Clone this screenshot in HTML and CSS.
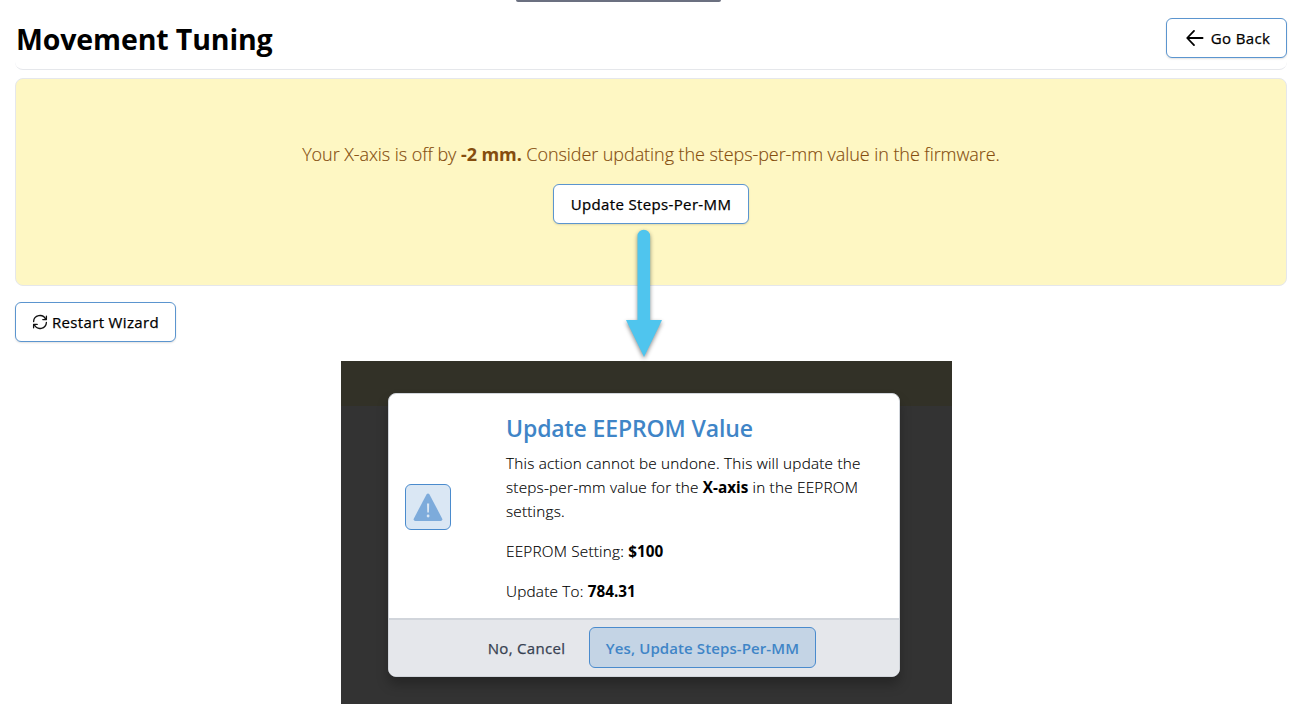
FILE: index.html
```html
<!DOCTYPE html>
<html lang="en">
<head>
<meta charset="utf-8">
<title>Movement Tuning</title>
<link rel="stylesheet" href="styles.css">
</head>
<body>
<div class="page">
  <div class="handle"></div>
  <header class="header">
    <h1 class="title"><span>Movement Tuning</span></h1>
    <button class="btn btn-back">
      <svg class="icon-back" width="18" height="18" viewBox="0 0 18 18" fill="none" stroke="#000" stroke-width="1.8" stroke-linecap="round" stroke-linejoin="round"><path d="M16.6 9H1.6M8 1.9L1.2 9L8 16.1"/></svg>
      <span>Go Back</span>
    </button>
  </header>
  <section class="notice">
    <p class="notice-text"><span>Your X-axis is off by </span><b>-2 mm.</b><span> Consider updating the steps-per-mm value in the firmware.</span></p>
    <button class="btn btn-update"><span>Update Steps-Per-MM</span></button>
    <svg class="arrow" width="60" height="144" viewBox="0 0 60 144"><path d="M24.5 16a6.3 6.3 0 0 1 12.6 0V100H49L31 137L13 100H24.5Z" fill="#4fc5ee"/></svg>
  </section>
  <button class="btn btn-restart">
    <svg width="16" height="16" viewBox="0 0 16 16" fill="none" stroke="#111" stroke-width="1.3" stroke-linecap="round" stroke-linejoin="round"><path d="M1.6 7.6A6.3 6.3 0 0 1 13.6 5.2M14.4 2.2V5.6H10.8M14.4 8.4A6.3 6.3 0 0 1 2.4 10.8M1.6 13.8V10.4H5.2"/></svg>
    <span>Restart Wizard</span>
  </button>
  <div class="overlay">
    <div class="dialog">
      <div class="dialog-main">
        <div class="alert-icon">
          <svg width="30" height="28" viewBox="0 0 30 28"><path d="M13.5 1.4Q15 -.6 16.5 1.4L29.1 25.4Q30 27.8 27.6 28H2.4Q0 27.8 .9 25.4Z" fill="#7dabdb"/><path d="M14 10.5h2.2l-.3 9h-1.6z" fill="#dae7f4"/><circle cx="15.1" cy="23" r="1.4" fill="#dae7f4"/></svg>
        </div>
        <div class="dialog-content">
          <h2 class="dialog-title"><span>Update EEPROM Value</span></h2>
          <p><span>This action cannot be undone. This will update the</span><br><span>steps-per-mm value for the <b>X-axis</b> in the EEPROM</span><br><span>settings.</span></p>
          <p><span>EEPROM Setting: </span><b>$100</b></p>
          <p><span>Update To: </span><b>784.31</b></p>
        </div>
      </div>
      <footer class="dialog-footer">
        <button class="btn-cancel"><span>No, Cancel</span></button>
        <button class="btn-yes"><span>Yes, Update Steps-Per-MM</span></button>
      </footer>
    </div>
  </div>
</div>
</body>
</html>
```
FILE: styles.css
```css
* { box-sizing: border-box; }
body { margin: 0; background: #fff; color: #000; font-family: "Open Sans", "Noto Sans", sans-serif; }
h1, h2, p { margin: 0; }
button { font-family: inherit; cursor: pointer; }
.page { width: 1293px; height: 727px; padding: 0 6px 0 15px; overflow: hidden; }
.handle { width: 205px; height: 2px; margin-left: 501px; background: #6b7080; border-radius: 0 0 2px 2px; }
.header { display: flex; justify-content: space-between; height: 68px; padding-top: 16px; border-bottom: 1px solid #e5e7eb; border-radius: 0 0 8px 8px; }
.title { padding-left: 1px; font-size: 28.5px; line-height: 42px; font-weight: 700; letter-spacing: -.12px; white-space: nowrap; }
.btn { display: flex; align-items: center; justify-content: center; height: 40px; padding: 0; border: 1px solid #5b95cf; border-radius: 6px; background: #fff; color: #000; font-size: 15px; font-weight: 500; letter-spacing: .35px; -webkit-text-stroke: .25px currentColor; box-shadow: 0 1px 2px rgba(0, 0, 0, .12); white-space: nowrap; }
.btn-back { width: 121px; gap: 7px; padding-left: 3px; }
.notice { position: relative; display: flex; flex-direction: column; align-items: center; height: 208px; margin-top: 8px; padding-top: 61px; border: 1px solid #e5e7eb; border-radius: 8px; background: #fef7c3; }
.notice-text { height: 28px; margin-bottom: 16px; font-size: 18px; line-height: 28px; letter-spacing: -.07px; color: #854d0e; white-space: pre; font-weight: 300; }
.notice-text span, .dialog-content p { -webkit-text-stroke: .15px currentColor; }
.btn-update { width: 196px; }
.arrow { position: absolute; left: 597px; top: 141px; z-index: 2; filter: drop-shadow(0 2px 2px rgba(0, 0, 0, .45)); }
.btn-restart { width: 161px; margin-top: 16px; gap: 4px; }
.overlay { width: 611px; height: 343px; margin: 19px 0 0 326px; padding: 32px 0 0 47px; background: linear-gradient(#323127 0 45px, #333 45px); }
.dialog { width: 512px; height: 284px; display: flex; flex-direction: column; overflow: hidden; border: 1px solid #d1d5db; border-radius: 8px; background: #fff; box-shadow: 0 8px 12px rgba(0, 0, 0, .25); }
.dialog-main { flex: 1; min-height: 0; display: flex; align-items: center; padding-left: 16px; }
.alert-icon { width: 46px; height: 46px; margin-top: 2px; display: flex; align-items: center; justify-content: center; border: 1px solid #4a8bcd; border-radius: 6px; background: #dae7f4; }
.dialog-content { align-self: flex-start; margin-left: 55px; padding-top: 18px; font-size: 15.3px; line-height: 24px; font-weight: 300; letter-spacing: .21px; white-space: nowrap; }
.dialog-content p { margin-bottom: 16px; }
.dialog-content p:last-child { margin-bottom: 0; }
.notice-text b, .dialog-content b { font-weight: 700; -webkit-text-stroke: 0; }
.dialog-content b { letter-spacing: 0; }
.dialog-title { margin-bottom: 7px; font-size: 23px; line-height: 32px; font-weight: 600; letter-spacing: -.12px; color: #3f85c7; }
.dialog-footer { display: flex; flex: none; height: 58px; padding: 7px 0 0 83px; border-top: 2px solid #d1d5db; background: #e5e7eb; }
.btn-cancel, .btn-yes { height: 41px; padding: 0; font-size: 15px; font-weight: 500; white-space: nowrap; }
.btn-cancel { width: 109px; border: 0; background: none; color: #374151; letter-spacing: .3px; -webkit-text-stroke: .25px currentColor; }
.btn-yes { width: 227px; margin-left: 8px; border: 1px solid #4a8bcd; border-radius: 6px; background: #c4d4e5; color: #3f85c7; font-weight: 600; letter-spacing: .1px; }
```
